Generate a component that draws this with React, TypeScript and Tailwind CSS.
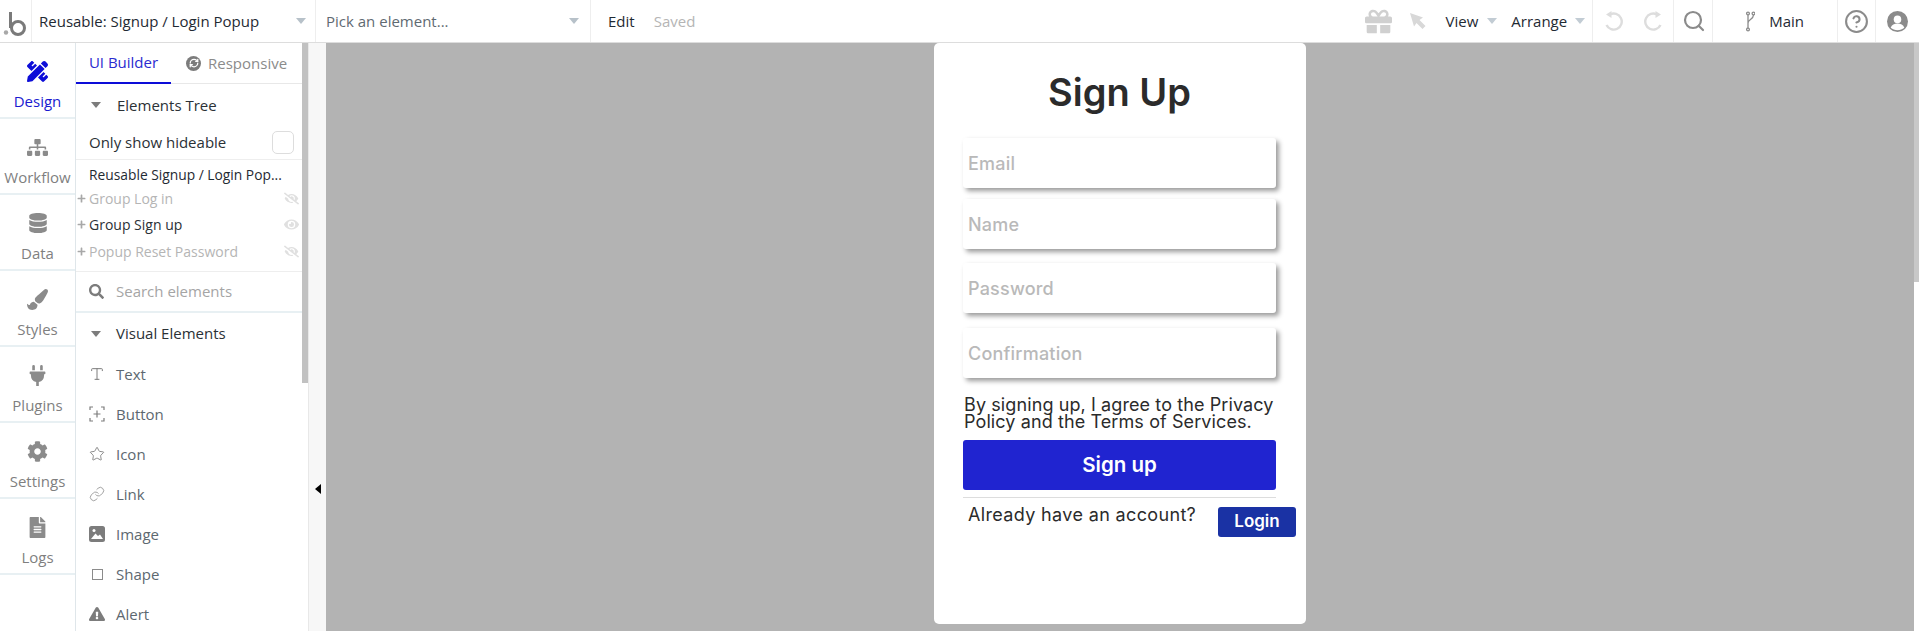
import React from 'react';
import {
  FaPencilRuler,
  FaSitemap,
  FaDatabase,
  FaPaintBrush,
  FaPlug,
  FaCog,
  FaFileAlt,
  FaSearch,
  FaEye,
  FaEyeSlash,
  FaExclamationTriangle,
  FaGift,
  FaPlus,
} from 'react-icons/fa';
import { Search, Star, Link, CircleHelp, RefreshCw, Type } from 'lucide-react';

const uiFont = "font-['Open_Sans',sans-serif]";
const formFont = "font-['Inter',sans-serif]";

const Caret: React.FC<{ className?: string }> = ({ className = 'border-t-[#b7c1c9]' }) => (
  <span className={`inline-block h-0 w-0 border-x-[5px] border-t-[6px] border-x-transparent ${className}`} />
);

const Divider = () => <div className="h-full w-px shrink-0 bg-[#eeeeee]" />;

const Logo = () => (
  <svg width="28" height="34" viewBox="0 0 28 34" fill="none" stroke="#7a7a7a">
    <circle cx="6" cy="28.500" r="2.200" fill="#a8a8a8" stroke="none" />
    <path d="M10.500 8v16" strokeWidth="3" />
    <circle cx="18" cy="24" r="6.500" strokeWidth="3" />
  </svg>
);

const ImageIcon = () => (
  <svg width="16" height="16" viewBox="0 0 16 16">
    <rect width="16" height="16" rx="2.500" fill="#7c7c7c" />
    <path d="M2 13 6.500 7.500l2.500 2.500 2-1.500L14 13z" fill="#fff" />
    <circle cx="5" cy="4.500" r="1.500" fill="#fff" />
  </svg>
);

const ButtonIcon = () => (
  <svg width="16" height="16" viewBox="0 0 16 16" fill="none" stroke="#7c7c7c" strokeWidth="1.200">
    <path d="M1 4V1h3M12 1h3v3M15 12v3h-3M4 15H1v-3M8 4.500v7M4.500 8h7" />
  </svg>
);

const ShapeIcon = () => <span className="block h-[11px] w-[11px] border border-[#8b8b8b]" />;

const UndoIcon: React.FC<{ className?: string }> = ({ className }) => (
  <svg width="19" height="20" viewBox="0 0 19 20" fill="none" stroke="#dddddd" strokeWidth="2.400" className={className}>
    <path d="M6 3.500A8 8 0 1 1 2.500 14" />
    <path d="M7.500 0v7L2 3.500z" fill="#dddddd" stroke="none" />
  </svg>
);

const BranchIcon = () => (
  <svg width="9" height="21" viewBox="0 0 9 21" fill="none" stroke="#8b8b8b" strokeWidth="1.300">
    <circle cx="2" cy="2.500" r="1.400" />
    <circle cx="7.500" cy="2.500" r="1.400" />
    <circle cx="2" cy="18.500" r="1.400" />
    <path d="M2 4v13M7.500 4c0 4-5.500 5-5.500 8" />
  </svg>
);

const navItems = [
  { label: 'Design', icon: <FaPencilRuler size={21} />, active: true },
  { label: 'Workflow', icon: <FaSitemap size={21} /> },
  { label: 'Data', icon: <FaDatabase size={20} /> },
  { label: 'Styles', icon: <FaPaintBrush size={21} /> },
  { label: 'Plugins', icon: <FaPlug size={21} /> },
  { label: 'Settings', icon: <FaCog size={21} /> },
  { label: 'Logs', icon: <FaFileAlt size={21} /> },
];

const visualElements = [
  { label: 'Text', icon: <Type size={18} stroke="#7c7c7c" strokeWidth={1.500} /> },
  { label: 'Button', icon: <ButtonIcon /> },
  { label: 'Icon', icon: <Star size={16} stroke="#7c7c7c" strokeWidth={1.300} /> },
  { label: 'Link', icon: <Link size={16} stroke="#8c8c8c" strokeWidth={1.200} /> },
  { label: 'Image', icon: <ImageIcon /> },
  { label: 'Shape', icon: <ShapeIcon /> },
  { label: 'Alert', icon: <FaExclamationTriangle size={16} color="#7c7c7c" /> },
];

const treeRows = [
  { label: 'Group Log in', hidden: true, height: 'h-[26px]' },
  { label: 'Group Sign up', hidden: false, height: 'h-[27px]' },
  { label: 'Popup Reset Password', hidden: true, height: 'h-[26px]' },
];

const TopBar = () => (
  <div className="flex h-[43px] shrink-0 items-center border-b border-[#dddddd] bg-white text-[15px] text-[#1f2a33]">
    <div className="flex h-full w-[32px] items-center border-r border-[#eeeeee]">
      <Logo />
    </div>
    <div className="flex h-full w-[284px] items-center justify-between border-r border-[#eeeeee] pr-[9px] pl-[7px]">
      <span>Reusable: Signup / Login Popup</span>
      <Caret />
    </div>
    <div className="flex h-full w-[275px] items-center justify-between border-r border-[#eeeeee] pr-[11px] pl-[10px]">
      <span className="text-[#5f6a72]">Pick an element...</span>
      <Caret />
    </div>
    <span className="ml-[17px]">Edit</span>
    <span className="ml-[19px] text-[#b5b5b5]">Saved</span>
    <div className="ml-auto flex h-full items-center pr-[11px]">
      <FaGift size={27} color="#d0d0d0" className="mr-[16px]" />
      <svg width="20" height="20" viewBox="0 0 20 20" fill="#d8d8d8" className="mr-[18px]">
        <path d="M2 2 15 6.500 11.500 9l6 6-3 3-6-6L6 15.500z" />
      </svg>
      <span>View</span>
      <Caret className="mr-[14px] ml-[9px] border-t-[#c2ccd4]" />
      <span>Arrange</span>
      <Caret className="mr-[7px] ml-[8px] border-t-[#c2ccd4]" />
      <Divider />
      <UndoIcon className="mr-[21px] ml-[11px]" />
      <UndoIcon className="mr-[10px] -scale-x-100" />
      <Divider />
      <Search size={24} stroke="#8b8b8b" strokeWidth={2.200} className="mr-[6px] ml-[8px]" />
      <Divider />
      <div className="mr-[14px] ml-[33px] flex items-center">
        <BranchIcon />
      </div>
      <span>Main</span>
      <div className="ml-[33px] h-full">
        <Divider />
      </div>
      <CircleHelp size={25} stroke="#8b8b8b" strokeWidth={2} className="mx-[6px]" />
      <Divider />
      <svg width="21" height="21" viewBox="0 0 20 20" className="ml-[11px]">
        <circle cx="10" cy="10" r="10" fill="#8b8b8b" />
        <circle cx="10" cy="8" r="3.600" fill="#fff" />
        <path d="M3.500 16c1-3 3.500-4 6.500-4s5.500 1 6.500 4c-3.500 3-9.500 3-13 0z" fill="#fff" />
      </svg>
    </div>
  </div>
);

const SideNav = () => (
  <div className="flex w-[76px] shrink-0 flex-col border-r border-[#dfe6ea] bg-white text-[15px]">
    {navItems.map((item) => (
      <div
        key={item.label}
        className={`flex h-[76px] shrink-0 flex-col items-center border-b-2 border-[#e8f0f3] pt-[16px] ${
          item.active ? 'text-[#1a1ad0]' : 'text-[#7f7f7f]'
        }`}
      >
        <div className={`flex h-[24px] items-center ${item.active ? 'text-[#0d0dd8]' : 'text-[#8b8b8b]'}`}>{item.icon}</div>
        <span className="mt-[7px]">{item.label}</span>
      </div>
    ))}
  </div>
);

const Panel = () => (
  <div className="flex w-[226px] shrink-0 flex-col overflow-hidden bg-white text-[15px] text-[#2b3136]">
    <div className="flex h-[41px] shrink-0 border-b border-[#e8e8e8]">
      <div className="flex h-[41px] w-[95px] items-center justify-center border-b-2 border-[#0d0dd8] text-[#2a2ad0]">
        UI Builder
      </div>
      <div className="flex items-center pl-[15px] text-[#8b8b8b]">
        <span className="mr-[7px] flex h-[15px] w-[15px] items-center justify-center rounded-full bg-[#7c7c7c]">
          <RefreshCw size={10} stroke="#fff" strokeWidth={3} />
        </span>
        Responsive
      </div>
    </div>
    <div className="flex h-[42px] shrink-0 items-center pl-[15px]">
      <Caret className="border-t-[#7c7c7c]" />
      <span className="ml-[16px]">Elements Tree</span>
    </div>
    <div className="flex h-[34px] shrink-0 items-center justify-between border-b border-[#eeeeee] pr-[8px] pl-[13px]">
      <span>Only show hideable</span>
      <span className="h-[23px] w-[22px] rounded-[5px] border border-[#dddddd]" />
    </div>
    <div className="flex h-[25px] shrink-0 items-center pt-[5px] pl-[13px] text-[13.800px] text-[#1f2a33]">
      Reusable Signup / Login Pop...
    </div>
    {treeRows.map((row) => (
      <div key={row.label} className={`flex shrink-0 items-center pr-[3px] pl-[1px] text-[14px] ${row.height}`}>
        <span className="flex w-[12px]">
          <FaPlus size={9} color="#a8a8a8" />
        </span>
        <span className={row.hidden ? 'text-[#b5b5b5]' : 'text-[#2b3136]'}>{row.label}</span>
        {row.hidden ? <FaEyeSlash size={15} color="#e0e0e0" className="ml-auto" /> : <FaEye size={15} color="#e0e0e0" className="ml-auto" />}
      </div>
    ))}
    <div className="mt-[7px] flex h-[42px] shrink-0 items-center border-t border-b-2 border-t-[#eeeeee] border-b-[#e8f0f3] pl-[13px] text-[#a5a5a5]">
      <FaSearch size={15} color="#7c7c7c" className="mr-[12px]" />
      Search elements
    </div>
    <div className="flex h-[41px] shrink-0 items-center pl-[15px]">
      <Caret className="border-t-[#7c7c7c]" />
      <span className="ml-[15px]">Visual Elements</span>
    </div>
    {visualElements.map((item) => (
      <div key={item.label} className="flex h-[40px] shrink-0 items-center pl-[13px] text-[#5d6870]">
        <span className="flex w-[16px] items-center justify-center">{item.icon}</span>
        <span className="ml-[11px]">{item.label}</span>
      </div>
    ))}
  </div>
);

const FormInput: React.FC<{ placeholder: string; className?: string }> = ({ placeholder, className = '' }) => (
  <div
    className={`flex h-[50px] shrink-0 items-center rounded-[3px] bg-white pl-[5px] text-[18px] font-medium tracking-[0.2px] text-[#b9b9b9] shadow-[3px_3px_5px_rgba(0,0,0,0.4)] ${className}`}
  >
    {placeholder}
  </div>
);

const SignUpCard = () => (
  <div className={`mx-auto flex h-[581px] w-[372px] flex-col rounded-[5px] bg-white pr-[30px] pl-[29px] ${formFont}`}>
    <h1 className="mt-[26px] h-[69px] shrink-0 text-center text-[38px] leading-[46px] font-semibold text-[#2b2b2b]">Sign Up</h1>
    <FormInput placeholder="Email" />
    <FormInput placeholder="Name" className="mt-[11px]" />
    <FormInput placeholder="Password" className="mt-[14px]" />
    <FormInput placeholder="Confirmation" className="mt-[15px]" />
    <p className="mt-[18px] ml-[1px] text-[18px] leading-[17px] tracking-[0.1px] whitespace-nowrap text-[#2b2b2b]">
      By signing up, I agree to the Privacy
      <br />
      Policy and the Terms of Services.
    </p>
    <button className="mt-[10px] h-[50px] shrink-0 rounded-[3px] bg-[#2024d0] text-[20.500px] font-semibold text-white">
      Sign up
    </button>
    <div className="mt-[7px] h-px shrink-0 bg-[#dddddd]" />
    <div className="flex items-start justify-between">
      <span className="mt-[5px] ml-[5px] text-[18px] leading-[24px] tracking-[0.35px] text-[#2b2b2b]">Already have an account?</span>
      <button className="mt-[9px] -mr-[20px] h-[30px] w-[78px] rounded-[3px] bg-[#1a32a4] text-[17px] font-semibold text-white">
        Login
      </button>
    </div>
  </div>
);

export default function App() {
  return (
    <div className={`flex h-[631px] w-[1919px] flex-col overflow-hidden bg-white ${uiFont}`}>
      <TopBar />
      <div className="flex min-h-0 flex-1">
        <SideNav />
        <Panel />
        <div className="w-[6px] shrink-0 bg-white">
          <div className="h-[340px] bg-[#c1c1c1]" />
        </div>
        <div className="flex w-[18px] shrink-0 justify-center border-l border-[#e8e8e8] bg-[#f7f7f7] pt-[441px]">
          <span className="h-0 w-0 border-y-[5px] border-r-[6px] border-y-transparent border-r-black" />
        </div>
        <div className="min-w-0 flex-1 bg-[#b3b3b3]">
          <SignUpCard />
        </div>
        <div className="w-[5px] shrink-0 bg-white">
          <div className="h-[239px] bg-[#c8c8c8]" />
        </div>
      </div>
    </div>
  );
}
